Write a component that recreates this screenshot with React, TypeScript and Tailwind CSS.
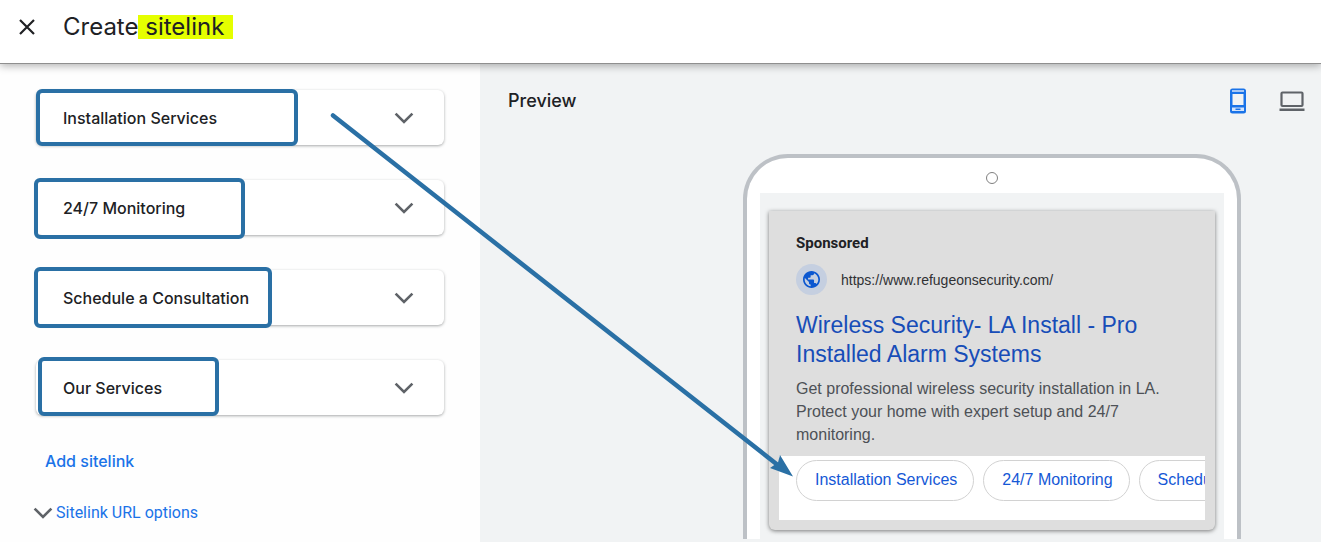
import clsx from "clsx";

const SITELINKS = [
  { label: "Installation Services", mark: "-top-px left-0 h-[57px] w-[262px]" },
  { label: "24/7 Monitoring", mark: "-top-0.5 -left-0.5 h-[61px] w-[211px]" },
  { label: "Schedule a Consultation", mark: "-top-[3px] -left-0.5 h-[61px] w-[238px]" },
  { label: "Our Services", mark: "-top-[3px] left-0.5 h-[59px] w-[181px]" },
];

function Chevron() {
  return (
    <svg viewBox="0 0 20 12" className="h-3 w-5 shrink-0" fill="none" stroke="#5f6368" strokeWidth="2.6">
      <path d="M1.6 1.6 10 10l8.4-8.4" />
    </svg>
  );
}

function Header() {
  return (
    <header className="relative z-10 flex h-16 items-center border-b border-[#8f8f8f] bg-white pb-2.5 shadow-[0_2px_8px_rgba(0,0,0,0.3)]">
      <button type="button" aria-label="Close" className="ml-[18px] p-px">
        <svg viewBox="0 0 16 16" className="h-4 w-4" fill="none" stroke="#202124" strokeWidth="2.2">
          <path d="M1 1l14 14M15 1 1 15" />
        </svg>
      </button>
      <h1 className="ml-[27px] flex text-2xl leading-6 text-[#202124]">
        Create
        <mark className="bg-[#e5ff00] pr-[9px] whitespace-pre text-inherit"> sitelink</mark>
      </h1>
    </header>
  );
}

function SitelinkCard({ label, mark }: { label: string; mark: string }) {
  return (
    <li className="relative rounded-md bg-white shadow-[0_1px_3px_rgba(60,64,67,0.45)]">
      <button type="button" className="flex h-[55px] w-full items-center justify-between pr-[30px] pl-[27px]">
        <span className="text-base font-medium text-[#202124]">{label}</span>
        <Chevron />
      </button>
      <span className={clsx("pointer-events-none absolute rounded-md border-4 border-[#2a70a5]", mark)} />
    </li>
  );
}

function SitelinkForm() {
  return (
    <section className="w-[480px] shrink-0 bg-[#fefefe] pt-[26px] pl-9">
      <ul className="mr-9 flex flex-col gap-[35px]">
        {SITELINKS.map((item) => (
          <SitelinkCard key={item.label} {...item} />
        ))}
      </ul>
      <button type="button" className="mt-9 ml-[9px] block text-base leading-5 font-medium text-[#1a73e8]">
        Add sitelink
      </button>
      <button
        type="button"
        className="mt-8 -ml-[3px] flex items-center gap-[3px] font-[Roboto,sans-serif] text-base leading-5 text-[#1a73e8]"
      >
        <Chevron />
        Sitelink URL options
      </button>
    </section>
  );
}

function DeviceToggle() {
  return (
    <div className="flex items-center gap-8">
      <button type="button" aria-label="Mobile preview">
        <svg viewBox="0 0 18 26" className="h-[26px] w-[18px]">
          <rect x="1" y="0.5" width="16" height="25" rx="2.5" fill="#1a73e8" />
          <path d="M3.5 6h11v11h-11z" fill="#f1f3f4" />
          <path d="M3 2.3h12v1.4H3zM3 19.5h12V23H3z" fill="#d5e4fa" />
          <path d="M6.5 20.5h5V22h-5z" fill="#1a73e8" />
        </svg>
      </button>
      <button type="button" aria-label="Desktop preview">
        <svg viewBox="0 0 26 20" className="h-5 w-[26px]">
          <rect x="2.5" y="1.5" width="21" height="13.5" rx="1" fill="none" stroke="#5f6368" strokeWidth="2.2" />
          <path d="M.5 17.5h25V20H.5z" fill="#5f6368" />
        </svg>
      </button>
    </div>
  );
}

function AdCard() {
  return (
    <article className="mx-[9px] mt-[18px] mb-[9px] rounded-b-md bg-[#dedede] px-2.5 pt-[23px] pb-2.5 font-['Liberation_Sans',sans-serif] shadow-[0_1px_4px_rgba(0,0,0,0.5)]">
      <div className="px-[17px]">
        <p className="font-[Roboto,sans-serif] text-[15px] leading-[18px] font-bold text-[#202124]">Sponsored</p>
        <div className="mt-3 flex items-center gap-3.5">
          <span className="flex size-[31px] items-center justify-center rounded-full bg-[#c5cfe0]">
            <svg viewBox="2 2 20 20" className="size-[17px]" fill="#0b57d0">
              <path d="M12 2C6.48 2 2 6.48 2 12s4.48 10 10 10 10-4.48 10-10S17.52 2 12 2zm-1 17.93c-3.95-.49-7-3.85-7-7.93 0-.62.08-1.21.21-1.79L9 15v1c0 1.1.9 2 2 2v1.93zm6.9-2.54c-.26-.81-1-1.39-1.9-1.39h-1v-3c0-.55-.45-1-1-1H8v-2h2c.55 0 1-.45 1-1V7h2c1.1 0 2-.9 2-2v-.41c2.93 1.19 5 4.06 5 7.41 0 2.08-.8 3.97-2.1 5.39z" />
            </svg>
          </span>
          <span className="text-sm text-[#303134]">https://www.refugeonsecurity.com/</span>
        </div>
        <h2 className="mt-4 text-[23px] leading-[29px] text-[#174db8]">
          <a href="#preview">
            Wireless Security- LA Install - Pro
            <br />
            Installed Alarm Systems
          </a>
        </h2>
        <p className="mt-2 pb-2.5 text-base leading-[23px] text-[#4d5156]">
          Get professional wireless security installation in LA.
          <br />
          Protect your home with expert setup and 24/7
          <br />
          monitoring.
        </p>
      </div>
      <nav className="flex gap-[9px] overflow-hidden bg-white pt-1 pb-[19px] pl-[17px]">
        {SITELINKS.slice(0, 3).map(({ label }) => (
          <a
            key={label}
            href="#preview"
            className="flex h-[41px] shrink-0 items-center rounded-full border border-[#d2d2d2] pr-4 pb-0.5 pl-[18px] text-base whitespace-nowrap text-[#1558d6]"
          >
            {label}
          </a>
        ))}
      </nav>
    </article>
  );
}

function Preview() {
  return (
    <section className="flex min-w-0 flex-1 flex-col bg-[#f1f3f4]">
      <div className="flex items-center justify-between pt-6 pr-4 pl-7">
        <h2 className="text-lg leading-6 font-medium text-[#202124]">Preview</h2>
        <DeviceToggle />
      </div>
      <div className="mt-10 mr-20 mb-[3px] w-[498px] self-end rounded-t-[45px] border-4 border-b-0 border-[#bdc1c6] bg-white px-[13px] pt-3.5">
        <div className="mx-auto size-3 rounded-full border border-[#808080]" />
        <div className="mt-[9px] flow-root bg-[#f1f3f4]">
          <AdCard />
        </div>
      </div>
    </section>
  );
}

function Arrow() {
  return (
    <svg className="pointer-events-none absolute top-[110px] left-[328px] z-20 h-[370px] w-[470px]" viewBox="328 110 470 370">
      <path d="M333 115.5 779 466" stroke="#2a70a5" strokeWidth="4.5" strokeLinecap="round" />
      <path d="M793 476.5 780 455l-2 7.500-8 5.500z" fill="#2a70a5" />
    </svg>
  );
}

export default function App() {
  return (
    <div className="relative flex min-h-screen flex-col overflow-hidden bg-[#fefefe] font-[Inter,sans-serif]">
      <Header />
      <main className="flex flex-1">
        <SitelinkForm />
        <Preview />
      </main>
      <Arrow />
    </div>
  );
}
